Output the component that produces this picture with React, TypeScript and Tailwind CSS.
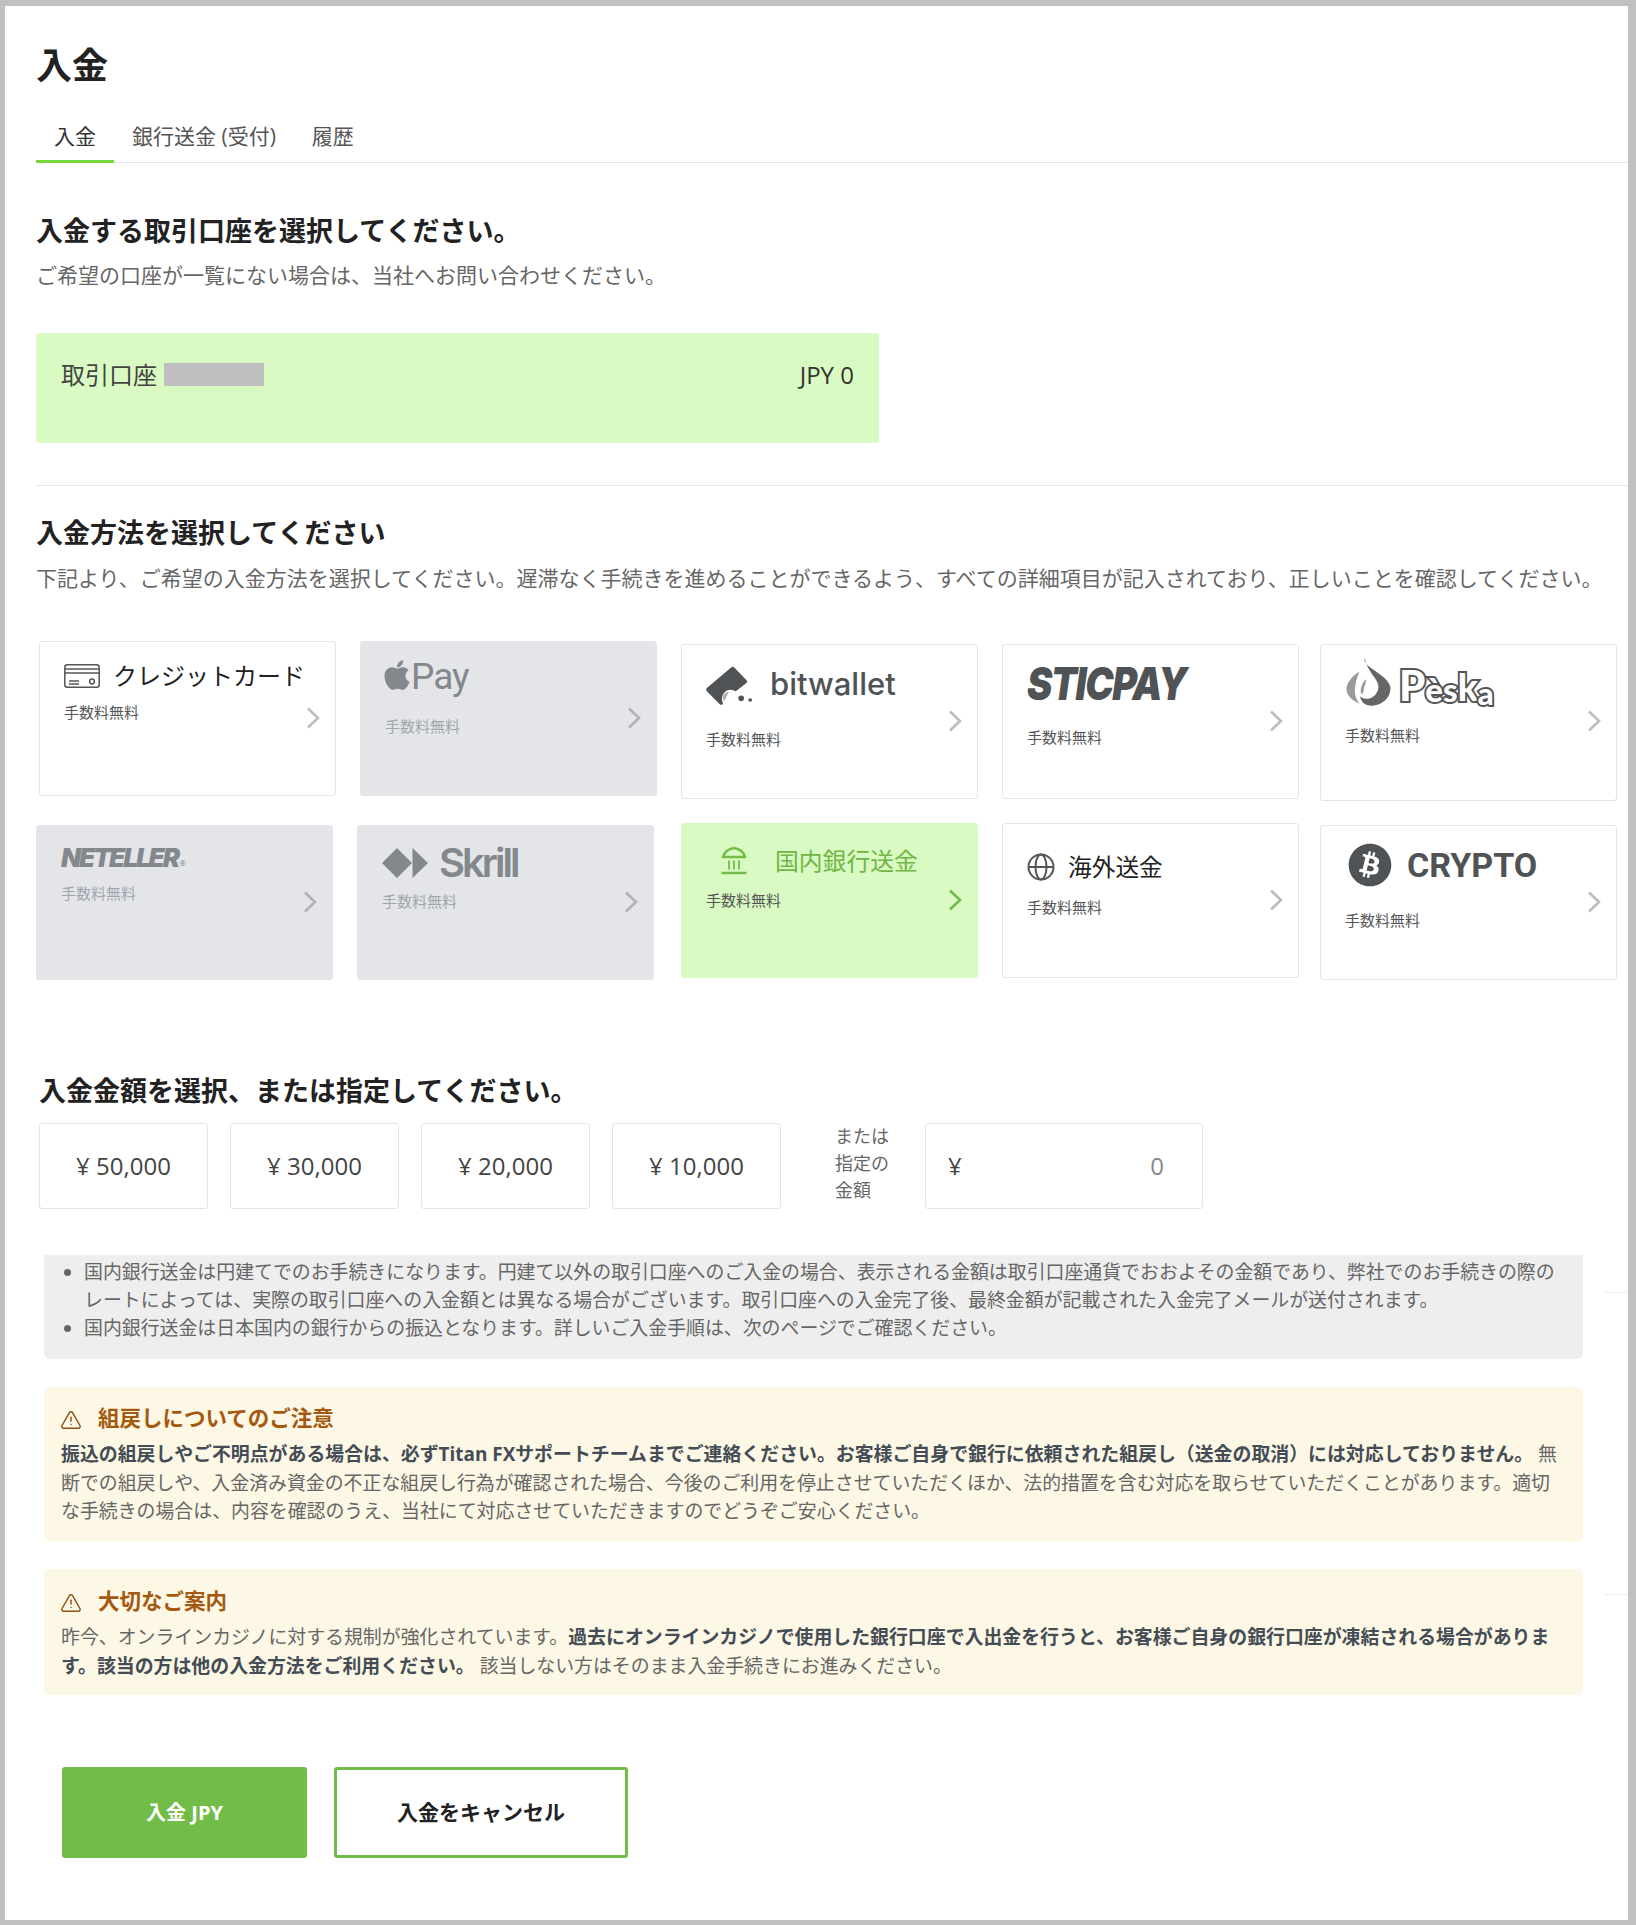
import React from "react";
import { FaApple, FaBitcoin } from "react-icons/fa";
import { TriangleAlert } from "lucide-react";

const Chevron = ({ active, disabled }: { active?: boolean; disabled?: boolean }) => (
  <svg
    viewBox="0 0 14 22"
    className={`mt-[65px] h-[22px] w-[14px] shrink-0 ${active ? "text-[#72bd47]" : disabled ? "text-[#b0b2b5]" : "text-[#bdbdbd]"}`}
    fill="none"
    stroke="currentColor"
    strokeWidth={2.6}
  >
    <path d="M2 1.5 12 11 2 20.5" />
  </svg>
);

type CardProps = {
  variant?: "plain" | "disabled" | "active";
  box: string;
  className?: string;
  children: React.ReactNode;
};

const Card = ({ variant = "plain", box, className = "", children }: CardProps) => {
  const bg =
    variant === "disabled"
      ? "bg-[#e3e5e9] border-[#e3e5e9]"
      : variant === "active"
        ? "bg-[#d9fac2] border-[#d9fac2]"
        : "bg-white border-[#e5e5e5]";
  return (
    <div className={`flex h-[155px] w-[297px] shrink-0 justify-between rounded-[3px] border pr-[15px] pl-[24px] ${bg} ${className}`}>
      <div>
        <div className={box}>{children}</div>
        <div className={`text-[15px] leading-[20px] ${variant === "disabled" ? "text-[#a2a5ad]" : "text-[#555]"}`}>手数料無料</div>
      </div>
      <Chevron active={variant === "active"} disabled={variant === "disabled"} />
    </div>
  );
};

const CardIcon = () => (
  <svg viewBox="0 0 36 24" className="h-[24px] w-[36px] text-[#555]" fill="none" stroke="currentColor" strokeWidth={1.5}>
    <rect x="0.8" y="0.8" width="34.4" height="22.4" rx="2.5" />
    <path d="M1 5h34M1 9h34M5 17h10M5 20h10" />
    <circle cx="28" cy="17.5" r="2.4" />
  </svg>
);

const BankIcon = () => (
  <svg viewBox="0 0 28 28" className="h-[29px] w-[28px] text-[#72bd47]" fill="none" stroke="currentColor" strokeWidth={2}>
    <path d="M3 10.500Q5 3 14 1.500 23 3 25 10.500zM1.500 26.500h25" strokeWidth={2.4} />
    <path d="M9 14v9M14 14v9M19 14v9" strokeWidth={1.8} />
  </svg>
);

const Globe = () => (
  <svg viewBox="0 0 28 28" className="h-[28px] w-[28px] text-[#555]" fill="none" stroke="currentColor" strokeWidth={2}>
    <circle cx="14" cy="14" r="12.500" />
    <ellipse cx="14" cy="14" rx="5.500" ry="12.500" />
    <path d="M1.500 14h25" />
  </svg>
);

const BitwalletMark = () => (
  <svg viewBox="20 30 140 120" className="h-[40px] w-[47px] text-[#4f5356]" fill="currentColor">
    <path d="M94 35q6-5 11 0l36 38q4 5-1 9l-31 24q-14-8-28-2-13 8-14 24 0 8 4 14-4 8-11 2l-38-38q-4-5 0-10z" />
    <path d="M88 108a17 17 0 0 0-14 28z" opacity={0.45} />
    <circle cx="125" cy="127" r="8.500" />
    <circle cx="152" cy="132" r="5.500" />
  </svg>
);

const PeskaFlame = () => (
  <svg viewBox="30 20 140 150" className="h-[50px] w-[47px]" fill="none">
    <path d="M88 22c-6 32 72 48 78 90 0 38-34 54-60 54-20 0-28-14-32-28 12 14 50 10 56-26 2-26-30-40-42-90z" fill="#666" />
    <path d="M72 64C46 80 34 100 34 116c0 20 18 36 40 44-16-18-22-42-2-96z" fill="#9a9a9a" />
    <path d="M92 86c-12 14-18 30-14 46 6-4 8-8 8-14 0-10 8-18 6-32z" fill="#9a9a9a" />
  </svg>
);

const SkrillMark = () => (
  <svg viewBox="0 0 46 30" className="h-[30px] w-[46px] text-[#84878c]" fill="currentColor">
    <path d="M15 0 30 15 15 30 0 15zM30.500 0 46 15 30.500 30z" />
  </svg>
);

const Amount = ({ value }: { value: string }) => (
  <div className="flex h-[86px] w-[169px] items-center justify-center rounded-[3px] border border-[#e5e5e5] text-[24px] text-[#444]">
    {value}
  </div>
);

const Warn = ({ title }: { title: string }) => (
  <div className="flex h-[30px] items-center gap-[16px] text-[21.500px] leading-[30px] font-bold text-[#a5590f]">
    <TriangleAlert className="mt-[3px] -ml-px size-[22px] text-[#8f5312]" strokeWidth={1.6} />
    <span>{title}</span>
  </div>
);

export default function App() {
  return (
    <div lang="ja" className="h-[1925px] w-[1636px] overflow-hidden bg-[#c0c0c0] pt-[6px] pr-[8px] pb-[5px] pl-[5px] font-['Open_Sans','Noto_Sans_CJK_JP',sans-serif]">
      <div className="h-full bg-white pt-[40px]">
        <h1 className="pl-[31px] text-[36px] leading-[40px] font-bold text-[#222]">入金</h1>

        <div className="mt-[39px] ml-[31px] flex h-[38px] items-stretch border-b border-[#e5e5e5] text-[21px] text-[#555]">
          <div className="-mb-px border-b-[3px] border-[#76d63a] px-[18px] leading-[22px] text-[#333]">入金</div>
          <div className="px-[18px] leading-[22px]">銀行送金 (受付)</div>
          <div className="px-[18px] leading-[22px]">履歴</div>
        </div>

        <div className="pl-[31px]">
          <h2 className="mt-[50px] text-[27px] leading-[36px] font-bold text-[#222]">入金する取引口座を選択してください。</h2>
          <p className="mt-[11px] text-[21px] leading-[30px] text-[#666]">ご希望の口座が一覧にない場合は、当社へお問い合わせください。</p>
          <div className="mt-[43px] flex h-[110px] w-[843px] items-start justify-between rounded-[3px] bg-[#d9fac2] pt-[26px] pr-[25px] pl-[25px] text-[24px] leading-[32px] text-[#444]">
            <div className="flex items-start">
              <span>取引口座</span>
              <span className="mt-[4px] ml-[7px] h-[23px] w-[100px] bg-[#bfbfbf]" />
            </div>
            <span className="text-[#333]">JPY 0</span>
          </div>
        </div>

        <div className="mt-[42px] ml-[31px] h-px bg-[#e8e8e8]" />

        <div className="pl-[31px]">
          <h2 className="mt-[29px] text-[27px] leading-[36px] font-bold text-[#222]">入金方法を選択してください</h2>
          <p className="mt-[12px] text-[21px] leading-[30px] whitespace-nowrap text-[#666]">
            下記より、ご希望の入金方法を選択してください。遅滞なく手続きを進めることができるよう、すべての詳細項目が記入されており、正しいことを確認してください。
          </p>
        </div>

        {/* row 1 */}
        <div className="mt-[48px] flex h-[160px] items-start pl-[34px]">
          <Card box="h-[60px] pt-[22px]">
            <div className="flex items-center gap-[13px] text-[24px] leading-[24px] text-[#222]">
              <CardIcon />
              <span>クレジットカード</span>
            </div>
          </Card>
          <Card variant="disabled" box="h-[74px] pt-[16px]" className="ml-[24px]">
            <div className="flex items-start text-[#84878c]">
              <FaApple className="-ml-[5px] size-[34px]" />
              <span className="-ml-[3px] font-['Roboto',sans-serif] text-[37px] leading-[38px] tracking-[-1px]">Pay</span>
            </div>
          </Card>
          <Card box="h-[84px] pt-[21px]" className="mt-[3px] ml-[24px]">
            <div className="flex items-start gap-[17px]">
              <BitwalletMark />
              <span className="mt-[1px] font-['Inter',sans-serif] text-[31px] leading-[34px] font-medium text-[#4f5356]">bitwallet</span>
            </div>
          </Card>
          <Card box="h-[82px] pt-[15px]" className="mt-[3px] ml-[24px]">
            <span className="inline-block origin-center scale-y-[1.2] font-['Inter',sans-serif] text-[38px] leading-[46px] font-black tracking-[-1.400px] text-[#4f5356] italic">STICPAY</span>
          </Card>
          <Card box="h-[80px] pt-[12px]" className="mt-[3px] ml-[21px] h-[157px]">
            <div className="flex items-start">
              <PeskaFlame />
              <div className="mt-[8px] ml-[7px] flex font-['Lato',sans-serif] font-black text-white [-webkit-text-stroke:4px_#555] [paint-order:stroke]">
                <span className="text-[42px] leading-[40px]">P</span>
                <span className="mt-[6px] text-[33px] leading-[36px]">è</span>
                <span className="mt-[6px] text-[33px] leading-[36px]">s</span>
                <span className="mt-[2px] text-[37px] leading-[40px]">k</span>
                <span className="mt-[12px] text-[31px] leading-[32px]">a</span>
              </div>
            </div>
          </Card>
        </div>

        {/* row 2 */}
        <div className="mt-[22px] flex h-[157px] items-start pl-[31px]">
          <Card variant="disabled" box="h-[57px] pt-[17px]" className="mt-[2px]">
            <div className="flex items-start text-[#84878c]">
              <span className="font-['Inter',sans-serif] text-[26px] leading-[30px] font-black tracking-[-2px] italic">NETELLER</span>
              <span className="mt-[15px] ml-[1px] text-[8px] leading-[10px]">®</span>
            </div>
          </Card>
          <Card variant="disabled" box="h-[65px] pt-[22px]" className="mt-[2px] ml-[24px]">
            <div className="flex items-center gap-[11px] text-[#84878c]">
              <SkrillMark />
              <span className="font-['Inter',sans-serif] text-[40px] leading-[30px] font-semibold tracking-[-3px]">Skrill</span>
            </div>
          </Card>
          <Card variant="active" box="h-[66px] pt-[22px] pl-[14px]" className="ml-[27px]">
            <div className="flex items-center gap-[27px] text-[23.800px] leading-[28px] text-[#6fb644]">
              <BankIcon />
              <span>国内銀行送金</span>
            </div>
          </Card>
          <Card box="h-[73px] pt-[29px]" className="ml-[24px]">
            <div className="flex items-center gap-[13px] text-[23.700px] leading-[28px] text-[#222]">
              <Globe />
              <span>海外送金</span>
            </div>
          </Card>
          <Card box="h-[84px] pt-[17px]" className="mt-[2px] ml-[21px]">
            <div className="ml-[3px] flex items-center gap-[15px] text-[#4f5356]">
              <FaBitcoin className="size-[44px]" />
              <span className="font-['Roboto',sans-serif] text-[34px] leading-[44px] font-bold">CRYPTO</span>
            </div>
          </Card>
        </div>

        <h2 className="mt-[93px] pl-[34px] text-[27px] leading-[36px] font-bold text-[#222]">入金金額を選択、または指定してください。</h2>

        <div className="mt-[14px] flex items-center pl-[34px]">
          <div className="flex gap-[22px]">
            <Amount value="¥ 50,000" />
            <Amount value="¥ 30,000" />
            <Amount value="¥ 20,000" />
            <Amount value="¥ 10,000" />
          </div>
          <div className="-mt-[6px] ml-[54px] w-[60px] text-[18px] leading-[27px] text-[#666]">
            または
            <br />
            指定の
            <br />
            金額
          </div>
          <div className="ml-[30px] flex h-[86px] w-[278px] items-center justify-between rounded-[3px] border border-[#e5e5e5] pr-[38px] pl-[22px] text-[24px]">
            <span className="text-[#444]">¥</span>
            <span className="text-[#888]">0</span>
          </div>
        </div>

        <div className="mt-[46px] flex items-start pl-[39px]">
          <div className="h-[104px] w-[1539px] rounded-b-[6px] bg-[#eeeeee] pt-[3px] pl-[40px] text-[18.900px] leading-[28px] whitespace-nowrap text-[#666]">
            <ul className="list-disc pl-0 marker:text-[#666]">
              <li>
                国内銀行送金は円建てでのお手続きになります。円建て以外の取引口座へのご入金の場合、表示される金額は取引口座通貨でおおよその金額であり、弊社でのお手続きの際の
                <br />
                レートによっては、実際の取引口座への入金額とは異なる場合がございます。取引口座への入金完了後、最終金額が記載された入金完了メールが送付されます。
              </li>
              <li>国内銀行送金は日本国内の銀行からの振込となります。詳しいご入金手順は、次のページでご確認ください。</li>
            </ul>
          </div>
          <div className="mt-[37px] ml-[21px] h-px w-[24px] bg-[#eeeeee]" />
        </div>

        <div className="mt-[28px] ml-[39px] h-[155px] w-[1539px] rounded-[6px] bg-[#fdf7e5] pt-[16px] pl-[17px] text-[18.900px] leading-[28.500px] whitespace-nowrap text-[#666]">
          <Warn title="組戻しについてのご注意" />
          <p className="mt-[7px]">
            <b className="text-[#444c55]">
              振込の組戻しやご不明点がある場合は、必ずTitan FXサポートチームまでご連絡ください。お客様ご自身で銀行に依頼された組戻し（送金の取消）には対応しておりません。
            </b>{" "}
            無
            <br />
            断での組戻しや、入金済み資金の不正な組戻し行為が確認された場合、今後のご利用を停止させていただくほか、法的措置を含む対応を取らせていただくことがあります。適切
            <br />
            な手続きの場合は、内容を確認のうえ、当社にて対応させていただきますのでどうぞご安心ください。
          </p>
        </div>

        <div className="mt-[27px] flex items-start pl-[39px]">
          <div className="h-[126px] w-[1539px] rounded-[6px] bg-[#fdf7e5] pt-[17px] pl-[17px] text-[18.900px] leading-[28.500px] whitespace-nowrap text-[#666]">
            <Warn title="大切なご案内" />
            <p className="mt-[7px]">
              昨今、オンラインカジノに対する規制が強化されています。
              <b className="text-[#444c55]">過去にオンラインカジノで使用した銀行口座で入出金を行うと、お客様ご自身の銀行口座が凍結される場合がありま</b>
              <br />
              <b className="text-[#444c55]">す。該当の方は他の入金方法をご利用ください。</b> 該当しない方はそのまま入金手続きにお進みください。
            </p>
          </div>
          <div className="mt-[25px] ml-[21px] h-px w-[24px] bg-[#eeeeee]" />
        </div>

        <div className="mt-[72px] flex gap-[27px] pl-[57px]">
          <button className="h-[91px] w-[245px] rounded-[3px] bg-[#72bd47] text-[20px] font-bold text-white">入金 JPY</button>
          <button className="h-[91px] w-[294px] rounded-[3px] border-[3px] border-[#72bd47] bg-white text-[21px] font-bold text-[#222]">入金をキャンセル</button>
        </div>
      </div>
    </div>
  );
}
